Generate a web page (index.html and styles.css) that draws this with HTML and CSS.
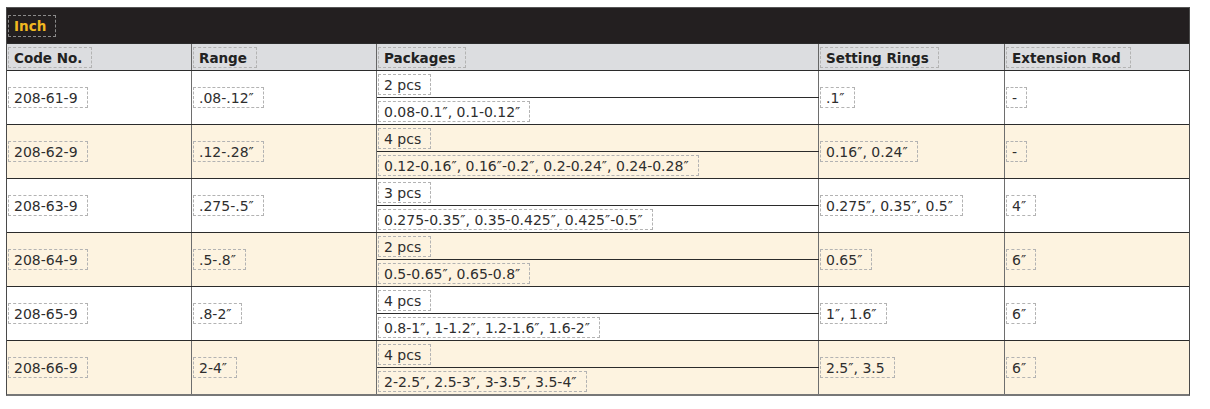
FILE: index.html
```html
<!DOCTYPE html>
<html>
<head>
<meta charset="utf-8">
<link rel="stylesheet" href="styles.css">
</head>
<body>
<div class="spec">
  <div class="title"><span class="tag">Inch</span></div>
  <div class="row head">
    <div class="cell"><span class="tag">Code No.</span></div>
    <div class="cell"><span class="tag">Range</span></div>
    <div class="cell"><span class="tag">Packages</span></div>
    <div class="cell"><span class="tag">Setting Rings</span></div>
    <div class="cell"><span class="tag">Extension Rod</span></div>
  </div>

  <div class="row odd">
    <div class="cell"><span class="tag">208-61-9</span></div>
    <div class="cell"><span class="tag">.08-.12″</span></div>
    <div class="cell pk"><div class="sub top"><span class="tag">2 pcs</span></div><div class="sub"><span class="tag">0.08-0.1″, 0.1-0.12″</span></div></div>
    <div class="cell"><span class="tag">.1″</span></div>
    <div class="cell"><span class="tag">-</span></div>
  </div>

  <div class="row even">
    <div class="cell"><span class="tag">208-62-9</span></div>
    <div class="cell"><span class="tag">.12-.28″</span></div>
    <div class="cell pk"><div class="sub top"><span class="tag">4 pcs</span></div><div class="sub"><span class="tag">0.12-0.16″, 0.16″-0.2″, 0.2-0.24″, 0.24-0.28″</span></div></div>
    <div class="cell"><span class="tag">0.16″, 0.24″</span></div>
    <div class="cell"><span class="tag">-</span></div>
  </div>

  <div class="row odd">
    <div class="cell"><span class="tag">208-63-9</span></div>
    <div class="cell"><span class="tag">.275-.5″</span></div>
    <div class="cell pk"><div class="sub top"><span class="tag">3 pcs</span></div><div class="sub"><span class="tag">0.275-0.35″, 0.35-0.425″, 0.425″-0.5″</span></div></div>
    <div class="cell"><span class="tag">0.275″, 0.35″, 0.5″</span></div>
    <div class="cell"><span class="tag">4″</span></div>
  </div>

  <div class="row even">
    <div class="cell"><span class="tag">208-64-9</span></div>
    <div class="cell"><span class="tag">.5-.8″</span></div>
    <div class="cell pk"><div class="sub top"><span class="tag">2 pcs</span></div><div class="sub"><span class="tag">0.5-0.65″, 0.65-0.8″</span></div></div>
    <div class="cell"><span class="tag">0.65″</span></div>
    <div class="cell"><span class="tag">6″</span></div>
  </div>

  <div class="row odd">
    <div class="cell"><span class="tag">208-65-9</span></div>
    <div class="cell"><span class="tag">.8-2″</span></div>
    <div class="cell pk"><div class="sub top"><span class="tag">4 pcs</span></div><div class="sub"><span class="tag">0.8-1″, 1-1.2″, 1.2-1.6″, 1.6-2″</span></div></div>
    <div class="cell"><span class="tag">1″, 1.6″</span></div>
    <div class="cell"><span class="tag">6″</span></div>
  </div>

  <div class="row even">
    <div class="cell"><span class="tag">208-66-9</span></div>
    <div class="cell"><span class="tag">2-4″</span></div>
    <div class="cell pk"><div class="sub top"><span class="tag">4 pcs</span></div><div class="sub"><span class="tag">2-2.5″, 2.5-3″, 3-3.5″, 3.5-4″</span></div></div>
    <div class="cell"><span class="tag">2.5″, 3.5</span></div>
    <div class="cell"><span class="tag">6″</span></div>
  </div>
</div>
</body>
</html>
```
FILE: styles.css
```css
html, body {
  margin: 0;
  padding: 0;
  background: #ffffff;
}
body {
  padding: 7px 0 0 6px;
  font-family: "DejaVu Sans", "Liberation Sans", sans-serif;
  font-size: 14px;
  color: #2e2e2e;
}
.spec {
  width: 1182px;
  border: 1px solid #4a4a4a;
  border-top-color: #555;
  border-bottom: 2px solid #777;
}
.title {
  height: 35px;
  background: #231f20;
  display: flex;
  align-items: center;
  padding-left: 1px;
}
.title .tag {
  color: #f0b820;
  font-weight: bold;
  font-size: 13.5px;
  border-color: #8a8a8a;
  padding: 2px 9px 2px 5px;
}
.row {
  display: grid;
  grid-template-columns: 185px 185px 442px 186px 184px;
  border-top: 1px solid #2b2b2b;
}
.head {
  height: 26px;
  background: #dcdde0;
  font-weight: bold;
  font-size: 13.5px;
  color: #222;
}
.head .cell { border-right-color: #666; }
.odd { background: #ffffff; height: 53px; }
.even { background: #fdf3e0; height: 53px; }
.cell {
  border-right: 1px solid #6e6e6e;
  display: flex;
  align-items: center;
  padding-left: 1px;
  min-width: 0;
}
.cell:last-child { border-right: none; }
.pk {
  flex-direction: column;
  align-items: stretch;
  padding-left: 0;
}
.sub {
  flex: 1;
  display: flex;
  align-items: center;
  padding-left: 1px;
}
.sub.top {
  border-bottom: 1px solid #2b2b2b;
  margin-right: -1px;
}
.tag {
  display: inline-block;
  border: 1px dashed #b3b3b3;
  padding: 2px 9px 1px 5px;
  line-height: 16px;
  white-space: nowrap;
}
```
